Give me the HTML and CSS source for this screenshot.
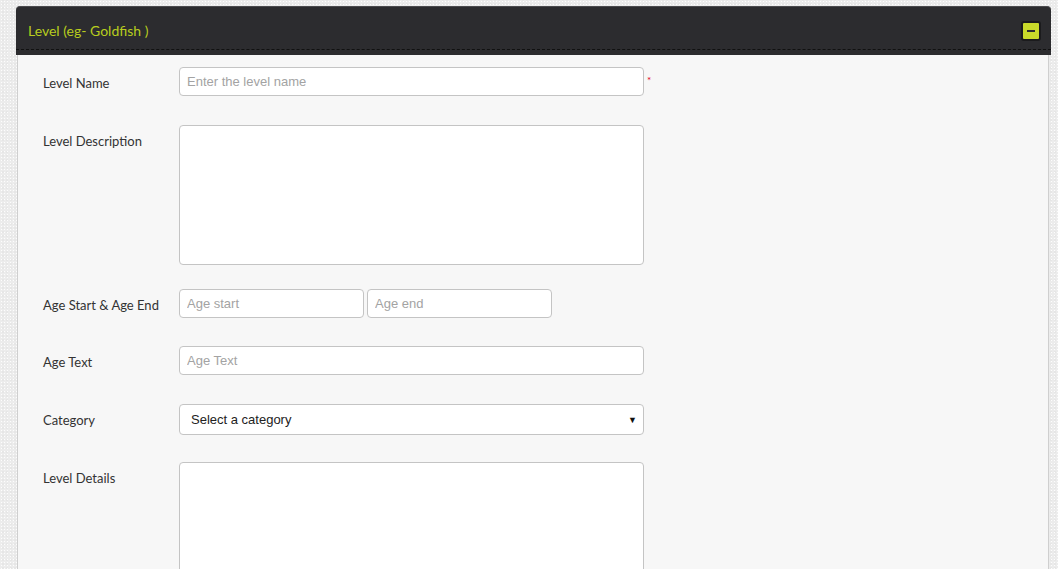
FILE: index.html
```html
<!DOCTYPE html>
<html lang="en">
<head>
    <meta charset="UTF-8">
    <title>Level</title>
    <link rel="stylesheet" href="styles.css">
</head>
<body>
    <div class="panel">
        <div class="panel-head">
            <div class="panel-head-inner">
                <span class="panel-title">Level (eg- Goldfish )</span>
                <span class="collapse-btn"><span class="minus"></span></span>
            </div>
        </div>

        <div class="panel-body">
            <div class="form-row gap-lg">
                <label class="form-label">Level Name</label>
                <div class="form-field">
                    <input class="form-input" type="text" placeholder="Enter the level name">
                    <span class="required">*</span>
                </div>
            </div>

            <div class="form-row gap-sm">
                <label class="form-label">Level Description</label>
                <div class="form-field">
                    <textarea class="form-input form-textarea"></textarea>
                </div>
            </div>

            <div class="form-row">
                <label class="form-label">Age Start &amp; Age End</label>
                <div class="form-field">
                    <input class="form-input age-input" type="text" placeholder="Age start">
                    <input class="form-input age-input" type="text" placeholder="Age end">
                </div>
            </div>

            <div class="form-row gap-lg">
                <label class="form-label">Age Text</label>
                <div class="form-field">
                    <input class="form-input" type="text" placeholder="Age Text">
                </div>
            </div>

            <div class="form-row gap-md">
                <label class="form-label">Category</label>
                <div class="form-field">
                    <div class="form-select">
                        <span>Select a category</span>
                        <span class="caret">&#9660;</span>
                    </div>
                </div>
            </div>

            <div class="form-row">
                <label class="form-label">Level Details</label>
                <div class="form-field">
                    <textarea class="form-input form-textarea details"></textarea>
                </div>
            </div>
        </div>
    </div>
</body>
</html>
```

FILE: styles.css
```css
html, body {
    height: 100%;
}

body {
    margin: 0;
    padding: 6px 7px 0 16px;
    background-color: #ececec;
    background-image:
        radial-gradient(rgba(255,255,255,0.9) 0.6px, transparent 0.8px),
        radial-gradient(rgba(0,0,0,0.06) 0.6px, transparent 0.8px);
    background-size: 3px 3px, 4px 4px;
    background-position: 0 0, 1px 2px;
    font-family: Lato, "Open Sans", sans-serif;
    overflow: hidden;
}

.panel {
    width: 1035px;
}

/* header */
.panel-head {
    background: #2c2c2f;
    border-top: 1px solid #4a4a4d;
    border-radius: 4px 4px 0 0;
    padding-bottom: 5px;
}

.panel-head-inner {
    height: 42px;
    border-bottom: 1px dashed #111;
    display: flex;
    align-items: center;
    justify-content: space-between;
    padding: 0 10px 0 12px;
}

.panel-title {
    color: #b8cd1e;
    font-size: 14px;
    padding-top: 5px;
}

.collapse-btn {
    width: 16px;
    height: 16px;
    margin-top: 6px;
    background: #c9da2a;
    border: 2px solid #1b1b1d;
    border-radius: 3px;
    display: flex;
    align-items: center;
    justify-content: center;
}

.minus {
    width: 8px;
    height: 2px;
    background: #2c2c2f;
}

/* body */
.panel-body {
    margin: 0 2px 0 1px;
    background: #f7f7f7;
    border-left: 1px solid #cfcfcf;
    border-right: 1px solid #cfcfcf;
    padding: 12px 0 0 25px;
    min-height: 600px;
}

.form-row {
    display: flex;
    margin-bottom: 28px;
}

.form-row.gap-lg {
    margin-bottom: 29px;
}

.form-row.gap-md {
    margin-bottom: 27px;
}

.form-row.gap-sm {
    margin-bottom: 24px;
}

.form-label {
    width: 136px;
    flex-shrink: 0;
    font-size: 13px;
    color: #333;
    padding-top: 8px;
}

.form-field {
    display: flex;
    gap: 3px;
    align-items: flex-start;
}

.form-input {
    box-sizing: border-box;
    width: 465px;
    height: 29px;
    margin: 0;
    padding: 0 7px;
    background: #fff;
    border: 1px solid #c4c4c4;
    border-radius: 4px;
    font-family: "Liberation Sans", Arial, sans-serif;
    font-size: 13px;
    color: #333;
    outline: none;
}

.form-input::placeholder {
    color: #a3a3a3;
}

.age-input {
    width: 185px;
}

.form-textarea {
    height: 140px;
    resize: none;
    padding: 6px 7px;
}

.form-textarea.details {
    height: 160px;
}

.required {
    color: #e3001b;
    font-size: 10px;
    line-height: 1;
    margin-top: 8px;
}

.form-select {
    box-sizing: border-box;
    width: 465px;
    height: 31px;
    background: #fff;
    border: 1px solid #c4c4c4;
    border-radius: 4px;
    display: flex;
    align-items: center;
    justify-content: space-between;
    padding: 0 6px 0 11px;
    font-family: "Liberation Sans", Arial, sans-serif;
    font-size: 13px;
    color: #222;
}

.caret {
    font-size: 9px;
    color: #111;
}
```
